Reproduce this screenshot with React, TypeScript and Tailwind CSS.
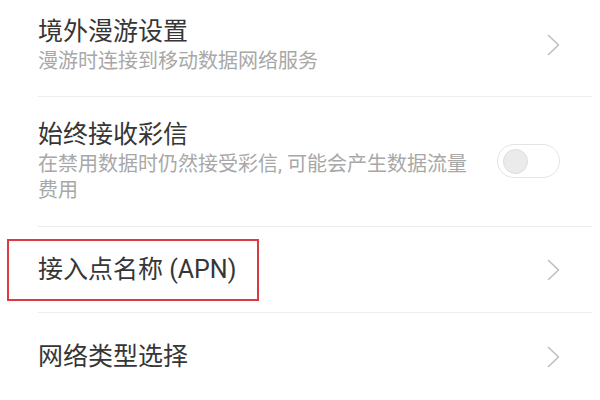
import React from 'react';

const font = { fontFamily: 'Roboto, "Noto Sans CJK SC", sans-serif' };

function Chevron() {
  return (
    <svg width="13" height="22" viewBox="0 0 13 22" fill="none">
      <path d="M1.5 1.5 L11.5 11 L1.5 20.5" stroke="#bfbfbf" strokeWidth="1.6" strokeLinecap="round" strokeLinejoin="round" />
    </svg>
  );
}

function Toggle() {
  return (
    <div className="w-[63px] h-[34px] rounded-full border border-[#e4e4e4] bg-white flex items-center">
      <div className="ml-[5px] w-[25px] h-[25px] rounded-full bg-[#ebebeb] border border-[#dcdcdc]" />
    </div>
  );
}

export default function App() {
  return (
    <div className="w-[600px] h-[400px] bg-white overflow-hidden" style={font}>
      <div className="pl-[38px] pr-[8px]">
        {/* roaming */}
        <div className="flex items-center justify-between border-b border-[#ededed] pt-[16px] pb-[22px]">
          <div>
            <div className="text-[25px] leading-[32px] text-[#363636]">境外漫游设置</div>
            <div className="text-[20px] leading-[26px] text-[#a8a8a8]">漫游时连接到移动数据网络服务</div>
          </div>
          <div className="pr-[32px] flex items-center">
            <Chevron />
          </div>
        </div>

        {/* mms */}
        <div className="flex items-center justify-between border-b border-[#ededed] pt-[22px] pb-[23px]">
          <div className="w-[445px]">
            <div className="text-[25px] leading-[32px] text-[#363636]">始终接收彩信</div>
            <div className="text-[20px] leading-[26px] text-[#a8a8a8]">在禁用数据时仍然接受彩信, 可能会产生数据流量费用</div>
          </div>
          <div className="pr-[32px] flex items-center">
            <Toggle />
          </div>
        </div>

        {/* apn */}
        <div className="relative flex items-center justify-between border-b border-[#ededed] h-[86px]">
          <div className="text-[25px] leading-[32px] text-[#363636]">接入点名称 (APN)</div>
          <div className="pr-[32px] flex items-center">
            <Chevron />
          </div>
          <div className="absolute left-[-31px] top-[12px] w-[252px] h-[62px] border-2 border-[#da3a40]" />
        </div>

        {/* network type */}
        <div className="flex items-center justify-between h-[88px]">
          <div className="text-[25px] leading-[32px] text-[#363636]">网络类型选择</div>
          <div className="pr-[32px] flex items-center">
            <Chevron />
          </div>
        </div>
      </div>
    </div>
  );
}
